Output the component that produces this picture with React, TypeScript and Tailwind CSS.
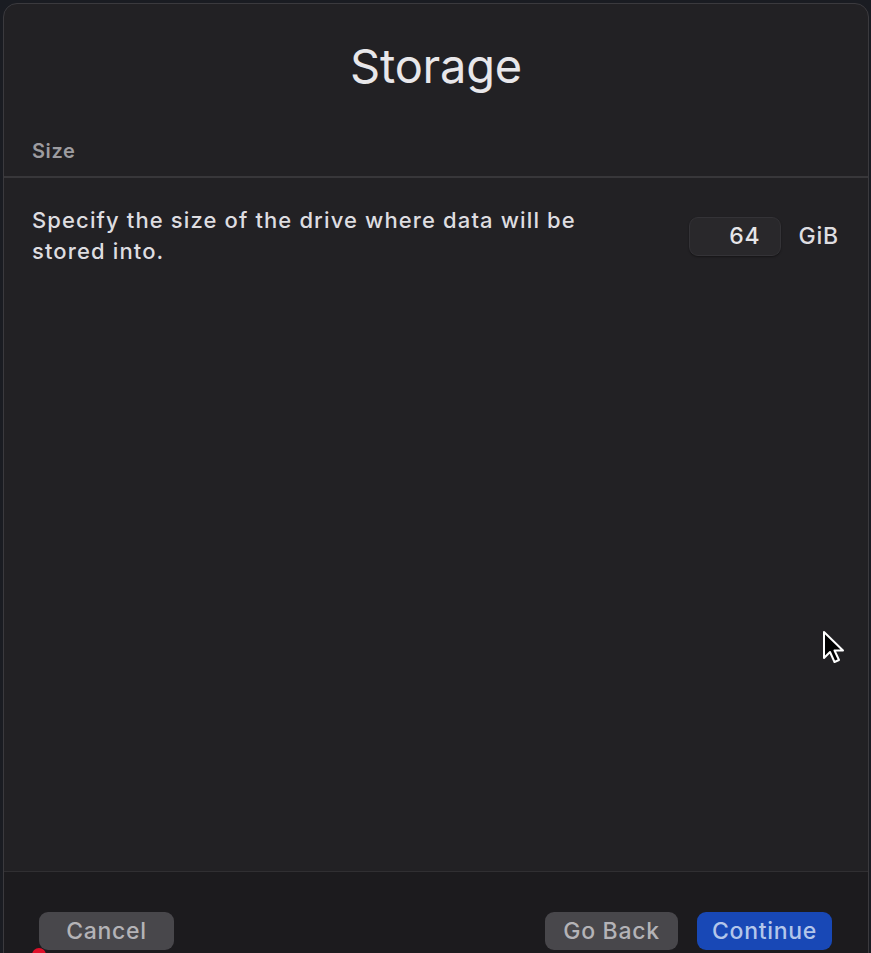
import React from "react";

export default function App() {
  return (
    <div
      className="relative w-[871px] h-[953px] overflow-hidden bg-[#1a1c22] pl-[3px] pt-[3px]"
      style={{ fontFamily: "Inter, 'Liberation Sans', sans-serif" }}
    >
      <div className="flex h-[990px] w-[866px] flex-col overflow-hidden rounded-t-[14px] border border-[#3b3a3e] bg-[#222124]">
        {/* Header */}
        <div className="flex h-[122px] items-center justify-center">
          <h1 className="text-[47px] font-normal leading-none tracking-[-0.005em] text-[#e8e7ea]">Storage</h1>
        </div>
        <div className="flex h-[50px] items-center px-[28px]">
          <span className="text-[20px] font-semibold tracking-[0.6px] text-[#9d9ca0]">Size</span>
        </div>
        <div className="h-[2px] bg-[#38373a]" />

        {/* Body */}
        <div className="flex h-[693px] flex-col">
          <div className="flex items-center pl-[28px] pr-[29px] pt-[27px]">
            <p className="w-[560px] text-[22px] font-medium leading-[31px] tracking-[1.12px] text-[#dedde0]">
              Specify the size of the drive where data will be stored into.
            </p>
            <div className="ml-auto flex items-center gap-[18px]">
              <div className="flex h-[39px] w-[92px] items-center justify-end rounded-[9px] border border-[#343337] bg-[#29282b] pr-[19px] text-[23px] font-medium tracking-[0.8px] text-[#e6e5e8] shadow-[0_1px_2px_rgba(0,0,0,0.4)]">
                64
              </div>
              <span className="text-[23px] font-medium tracking-[0.8px] text-[#dedde0]">GiB</span>
            </div>
          </div>
        </div>

        {/* Footer */}
        <div className="h-[1px] bg-[#302f32]" />
        <div className="flex flex-1 items-start bg-[#1c1b1e] pl-[35px] pr-[36px] pt-[40px] text-[23px] font-medium tracking-[0.7px]">
          <button className="flex h-[38px] w-[135px] items-center justify-center rounded-[9px] bg-[#48474b] text-[#b4b3b7]">
            Cancel
          </button>
          <div className="ml-auto flex gap-[19px]">
            <button className="flex h-[38px] w-[133px] items-center justify-center rounded-[9px] bg-[#48474b] text-[#b4b3b7]">
              Go Back
            </button>
            <button className="flex h-[38px] w-[135px] items-center justify-center rounded-[9px] bg-[#1848b6] text-[#b3c6ea]">
              Continue
            </button>
          </div>
        </div>
      </div>

      {/* mouse cursor */}
      <svg className="absolute left-[822px] top-[630px]" width="26" height="38" viewBox="0 0 26 38">
        <path
          d="M2 2 L2 28 L8 22 L12.5 32 L17 30 L12.5 20.5 L21 20.5 Z"
          fill="#000"
          stroke="#fff"
          strokeWidth="2"
          strokeLinejoin="round"
        />
      </svg>

      {/* red dot */}
      <div className="absolute left-[32px] top-[948px] h-[14px] w-[14px] rounded-full bg-[#e0102a]" />
    </div>
  );
}
